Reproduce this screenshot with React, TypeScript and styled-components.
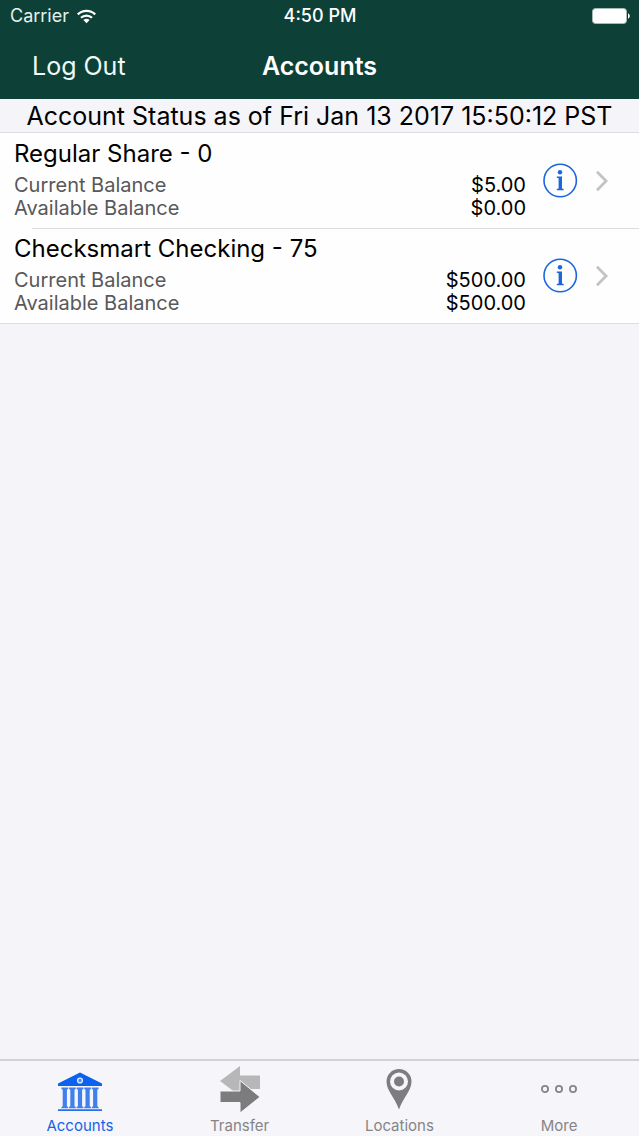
import React from "react";
import styled, { createGlobalStyle } from "styled-components";

const GlobalStyle = createGlobalStyle`
  *, *::before, *::after { box-sizing: border-box; }
  body {
    margin: 0;
    background: #f5f4f8;
    color: #000;
    font-family: Inter, "Liberation Sans", sans-serif;
  }
  button { font: inherit; border: 0; margin: 0; padding: 0; background: none; cursor: pointer; }
  svg { display: block; }
`;

const Screen = styled.div`
  display: flex;
  flex-direction: column;
  min-height: 100vh;
`;

const Header = styled.header`
  background: #0d4138;
  color: #fff;
`;

const StatusBar = styled.div`
  display: grid;
  grid-template-columns: 1fr auto 1fr;
  align-items: center;
  height: 32px;
  padding: 0 9px 0 10px;
  font-size: 18px;
  line-height: 32px;
`;

const Carrier = styled.span`
  display: flex;
  align-items: center;
  gap: 8px;
  color: #e3f1ee;
`;

const Clock = styled.time`
  font-weight: 500;
`;

const BatterySlot = styled.span`
  justify-self: end;
`;

const NavBar = styled.div`
  display: grid;
  grid-template-columns: 1fr auto 1fr;
  align-items: center;
  height: 67px;
  padding: 0 32px;
`;

const NavButton = styled.button`
  justify-self: start;
  color: #eefaf7;
  font-size: 25px;
  line-height: 32px;
`;

const Title = styled.h1`
  margin: 0;
  font-size: 25px;
  font-weight: 600;
  line-height: 32px;
`;

const Main = styled.main`
  flex: 1;
`;

const StatusHeading = styled.h2`
  margin: 0;
  padding-top: 1px;
  border-bottom: 1px solid #dddce1;
  font-size: 25px;
  font-weight: 400;
  line-height: 32px;
  text-align: center;
  white-space: nowrap;
`;

const AccountList = styled.ul`
  margin: 0;
  padding: 0;
  list-style: none;
  background: #fefefe;
  border-bottom: 1px solid #dddce1;
`;

const AccountRow = styled.li`
  position: relative;
  display: flex;
  align-items: center;
  padding: 0 31px 0 14px;

  & + &::before {
    content: "";
    position: absolute;
    top: 0;
    left: 32px;
    right: 0;
    height: 1px;
    background: #dcdce0;
  }
`;

const AccountInfo = styled.div`
  flex: 1;
  padding: 5px 0 8px;
`;

const AccountName = styled.h3`
  margin: 0 0 4px;
  font-size: 24px;
  font-weight: 400;
  line-height: 32px;
`;

const Balances = styled.dl`
  margin: 0;
  font-size: 20px;
  line-height: 23px;
`;

const Balance = styled.div`
  display: flex;
  justify-content: space-between;

  dt { color: #58585a; }
  dd { margin: 0; }
`;

const RowActions = styled.div`
  display: flex;
  align-items: center;
  gap: 18px;
  margin-left: 17px;
`;

const TabBar = styled.nav`
  position: sticky;
  bottom: 0;
  display: grid;
  grid-template-columns: repeat(4, 1fr);
  border-top: 2px solid #d2d1d5;
  background: #f6f5f9;
`;

const Tab = styled.a<{ $active?: boolean }>`
  display: flex;
  flex-direction: column;
  align-items: center;
  gap: 2px;
  padding-top: 5px;
  color: ${(p) => (p.$active ? "#1563e6" : "#858587")};
  font-size: 15px;
  line-height: 20px;
  text-decoration: none;
`;

const WifiIcon = () => (
  <svg width="19" height="15" viewBox="0 0 19 15" fill="none" stroke="#fff" strokeWidth="2.2" aria-hidden="true">
    <path d="M.8 5.4C5.6.7 13.4.7 18.2 5.4" />
    <path d="M4 8.8c3-3 8-3 11 0" />
    <path d="M9.5 14.2 6.4 11c1.7-1.6 4.5-1.6 6.2 0Z" fill="#fff" stroke="none" />
  </svg>
);

const BatteryIcon = () => (
  <svg width="38" height="16" viewBox="0 0 38 16" role="img" aria-label="Battery full">
    <rect x=".5" y=".5" width="34" height="15" rx="3" fill="#fff" stroke="#a5bbb6" />
    <path d="M36 5.5c2.4.6 2.4 4.4 0 5Z" fill="#fff" />
  </svg>
);

const InfoIcon = () => (
  <svg width="35" height="35" viewBox="0 0 35 35" fill="#1b66dd" aria-hidden="true">
    <circle cx="17.2" cy="17.5" r="16.2" fill="none" stroke="#1b66dd" strokeWidth="1.6" />
    <circle cx="17" cy="9.2" r="2.2" />
    <path d="M13.8 13.4h5.2v12l1.7.6v1.2h-6.900v-1.2l1.800-.6V15.200l-1.800-.5Z" />
  </svg>
);

const ChevronIcon = () => (
  <svg width="12" height="22" viewBox="0 0 12 22" fill="none" stroke="#c3c3c6" strokeWidth="2.8" aria-hidden="true">
    <path d="m1 1.800 9.100 9.200L1 20.200" />
  </svg>
);

const BankIcon = () => (
  <svg width="46" height="48" viewBox="0 -2 46 48" aria-hidden="true">
    <path d="M23 4.500 45 15.500v2.500H1v-2.500Z" fill="#0b62ee" />
    <circle cx="23" cy="12.500" r="2.400" fill="#4b8af2" stroke="#dce8fc" strokeWidth="1.400" />
    {[4.4, 12, 19.6, 27.2, 34.8].map((x) => (
      <path
        key={x}
        d={`M${x} 19.500h6.800v1.500l-1.300.8v16.500l1.300.700v1.200h-6.800v-1.200l1.300-.7v-16.500l-1.300-.8Z`}
        fill="#3f80ee"
      />
    ))}
    <path d="M1 41.200h44v1.900H1Z" fill="#2a70e4" />
  </svg>
);

const TransferIcon = () => (
  <svg width="42" height="48" viewBox="0 0 42 48" aria-hidden="true">
    <path d="M1 15 21 0v9.500h20V23H21v7Z" fill="#b7b6b9" />
    <path d="M1 25h20V14.500L41 31 21 47V36.500H1Z" fill="#7c7c7e" stroke="#f6f5f9" strokeWidth="1" />
  </svg>
);

const PinIcon = () => (
  <svg width="28" height="48" viewBox="0 -2 28 48" aria-hidden="true">
    <path
      d="M14 1C7 1 1.500 6.500 1.500 13.500c0 9 8 15.500 12.500 28 4.500-12.500 12.500-19 12.500-28C26.500 6.500 21 1 14 1Z"
      fill="#7d7d7f"
    />
    <circle cx="14" cy="13.500" r="9" fill="#f6f5f9" />
    <circle cx="14" cy="13.500" r="5" fill="#7d7d7f" />
  </svg>
);

const MoreIcon = () => (
  <svg width="38" height="48" viewBox="0 -2 38 48" fill="none" stroke="#858587" strokeWidth="1.8" aria-hidden="true">
    <circle cx="5" cy="21" r="3.1" />
    <circle cx="19" cy="21" r="3.1" />
    <circle cx="33" cy="21" r="3.1" />
  </svg>
);

const accounts = [
  { name: "Regular Share - 0", current: "$5.00", available: "$0.00" },
  { name: "Checksmart Checking - 75", current: "$500.00", available: "$500.00" },
];

const tabs = [
  { label: "Accounts", Icon: BankIcon, active: true },
  { label: "Transfer", Icon: TransferIcon },
  { label: "Locations", Icon: PinIcon },
  { label: "More", Icon: MoreIcon },
];

export default function App() {
  return (
    <>
      <GlobalStyle />
      <Screen>
        <Header>
          <StatusBar>
            <Carrier>
              Carrier
              <WifiIcon />
            </Carrier>
            <Clock>4:50 PM</Clock>
            <BatterySlot>
              <BatteryIcon />
            </BatterySlot>
          </StatusBar>
          <NavBar>
            <NavButton type="button">Log Out</NavButton>
            <Title>Accounts</Title>
          </NavBar>
        </Header>
        <Main>
          <StatusHeading>Account Status as of Fri Jan 13 2017 15:50:12 PST</StatusHeading>
          <AccountList>
            {accounts.map((account) => (
              <AccountRow key={account.name}>
                <AccountInfo>
                  <AccountName>{account.name}</AccountName>
                  <Balances>
                    <Balance>
                      <dt>Current Balance</dt>
                      <dd>{account.current}</dd>
                    </Balance>
                    <Balance>
                      <dt>Available Balance</dt>
                      <dd>{account.available}</dd>
                    </Balance>
                  </Balances>
                </AccountInfo>
                <RowActions>
                  <button type="button" aria-label={`Details for ${account.name}`}>
                    <InfoIcon />
                  </button>
                  <button type="button" aria-label={`Open ${account.name}`}>
                    <ChevronIcon />
                  </button>
                </RowActions>
              </AccountRow>
            ))}
          </AccountList>
        </Main>
        <TabBar>
          {tabs.map(({ label, Icon, active }) => (
            <Tab key={label} href={`#${label.toLowerCase()}`} $active={active} aria-current={active ? "page" : undefined}>
              <Icon />
              {label}
            </Tab>
          ))}
        </TabBar>
      </Screen>
    </>
  );
}
